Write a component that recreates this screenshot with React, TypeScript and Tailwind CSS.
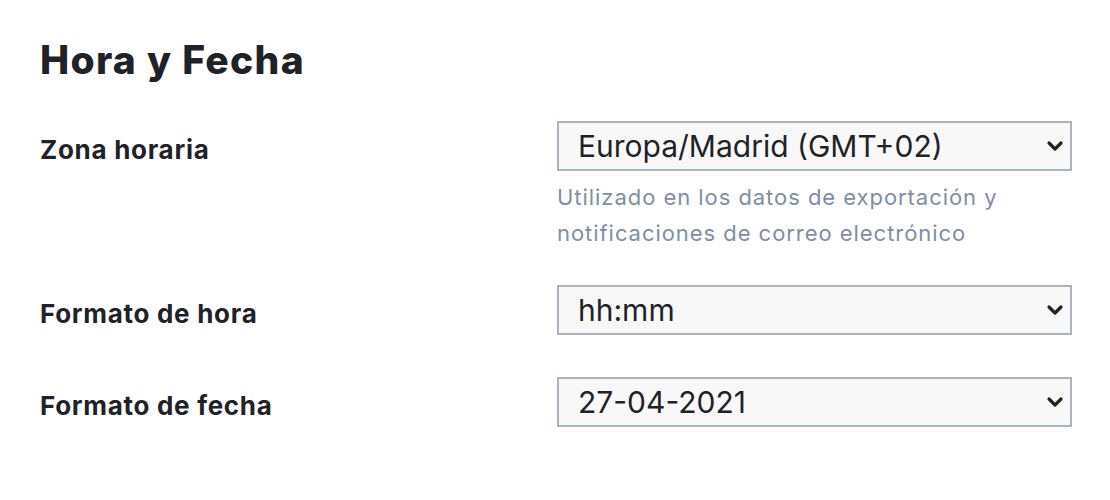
import type React from "react"

const Chevron = () => (
  <svg width="18" height="12" viewBox="0 0 18 12" className="shrink-0">
    <polyline points="3,3 9,9 15,3" fill="none" stroke="#1f2328" strokeWidth="3.2" strokeLinecap="round" strokeLinejoin="round" />
  </svg>
)

const FakeSelect: React.FC<{ value: string }> = ({ value }) => (
  <div className="flex h-[50px] w-[515px] items-center justify-between border-2 border-[#a9b4c1] bg-[#f8f8f8] pl-[19px] pr-[6px] text-[30px] text-[#1f2328]">
    <span>{value}</span>
    <Chevron />
  </div>
)

interface RowProps {
  label: string
  value: string
  help?: string[]
  className?: string
}

const Row: React.FC<RowProps> = ({ label, value, help, className }) => (
  <div className={`flex ${className ?? ""}`}>
    <div className="w-[517px] shrink-0 pt-[12px] text-[26px] font-bold leading-[34px] tracking-[0.7px] text-[#1f2328]">{label}</div>
    <div className="shrink-0">
      <FakeSelect value={value} />
      {help && (
        <div className="mt-[8px] text-[22px] leading-[36px] tracking-[0.95px] text-[#7f8fa3]">
          {help.map((line) => (
            <div key={line}>{line}</div>
          ))}
        </div>
      )}
    </div>
  </div>
)

export default function App() {
  return (
    <div className="h-[500px] w-[1110px] bg-white pl-[40px] pr-[38px] pt-[38px]" style={{ fontFamily: "Inter, 'Liberation Sans', sans-serif" }}>
      <h1 className="text-[39px] font-extrabold leading-[44px] tracking-[1.3px] text-[#1f2328]">Hora y Fecha</h1>
      <Row
        className="mt-[39px]"
        label="Zona horaria"
        value="Europa/Madrid (GMT+02)"
        help={["Utilizado en los datos de exportación y", "notificaciones de correo electrónico"]}
      />
      <Row className="mt-[34px]" label="Formato de hora" value="hh:mm" />
      <Row className="mt-[42px]" label="Formato de fecha" value="27-04-2021" />
    </div>
  )
}
